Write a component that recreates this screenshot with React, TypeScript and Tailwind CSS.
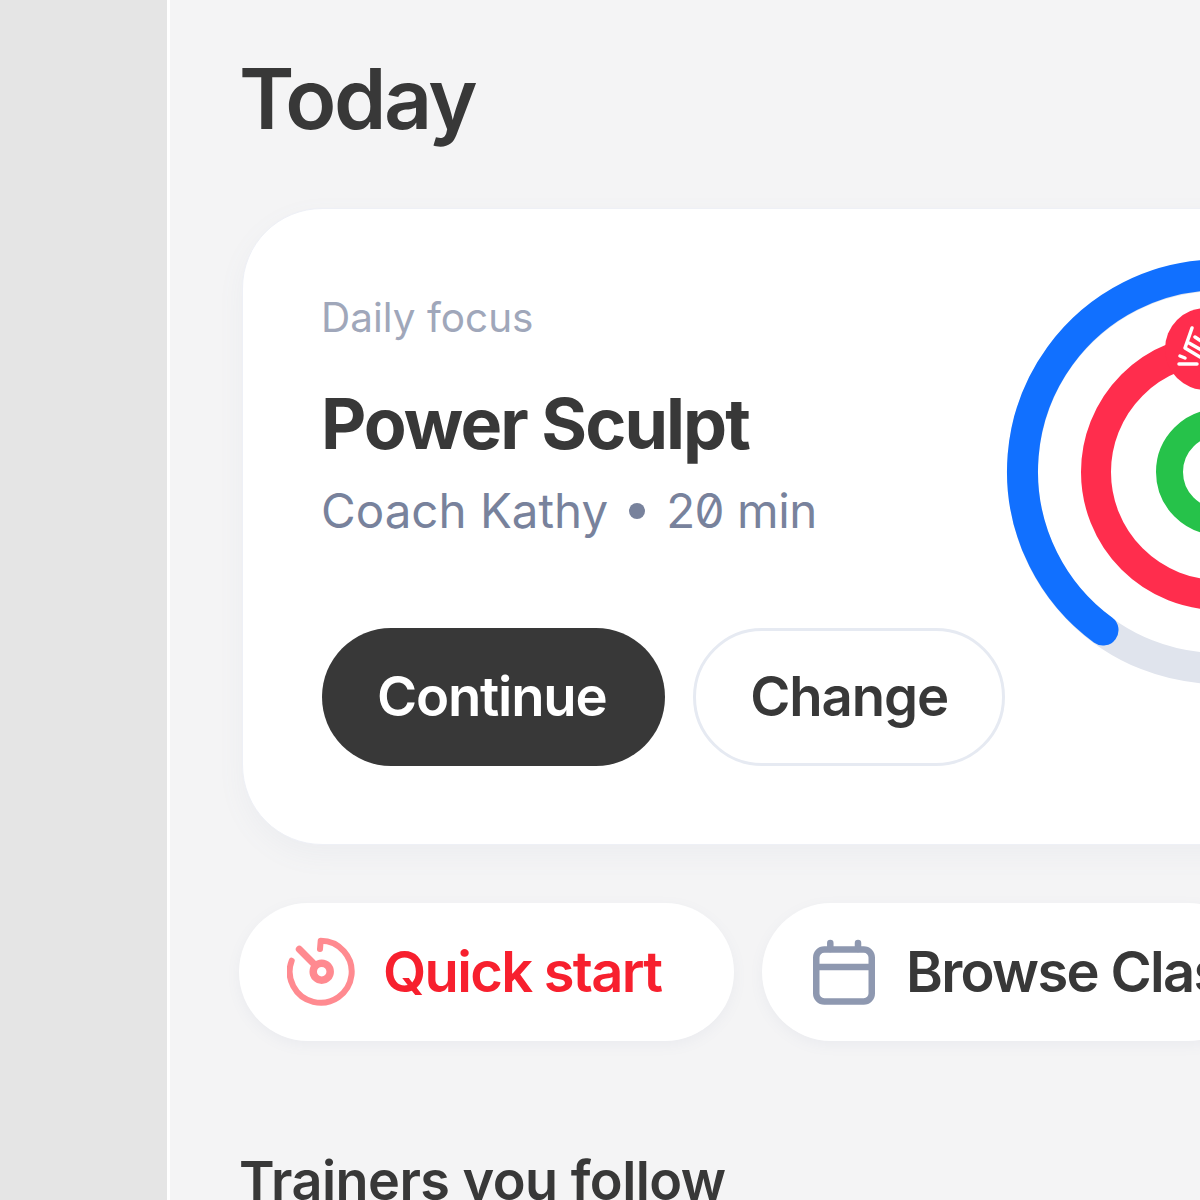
import React from 'react';

const inter = "font-['Inter',sans-serif]";

const Rings = () => (
  <svg className="shrink-0 mt-[-34px]" width="440" height="440" viewBox="0 0 440 440" fill="none">
    {/* centre sits at 214,212 so the rings run off the right edge like the source */}
    <circle cx="214" cy="212" r="196.5" stroke="#e0e4ed" strokeWidth="31" />
    <path d="M 98 370 A 196.5 196.5 0 1 1 410.5 212" stroke="#1170ff" strokeWidth="31" strokeLinecap="round" />
    <circle cx="214" cy="212" r="123" stroke="#ff2d4d" strokeWidth="30" />
    <circle cx="214" cy="212" r="49.5" stroke="#26c24a" strokeWidth="27" />
    <circle cx="201" cy="89" r="41" fill="#ff2d4d" />
    <path d="M174 104h18M175 96l5 2" stroke="#fff" strokeWidth="3.5" strokeLinecap="round" />
    <path d="M187 68l-7 20 15 9M190 77l12 8M184 83l14 8" stroke="#fff" strokeWidth="3.5" strokeLinecap="round" strokeLinejoin="round" />
  </svg>
);

const QuickIcon = () => (
  <svg className="shrink-0" width="70" height="70" viewBox="0 0 70 70" fill="none" stroke="#ff8a90" strokeLinecap="round">
    <path d="M4.7 23.7A31 31 0 1 0 33.7 3.7L33 12" strokeWidth="6" strokeLinejoin="round" />
    <circle cx="34.7" cy="34.7" r="8.5" strokeWidth="7.5" />
    <path d="M12.3 12.3L26 26" strokeWidth="7" />
  </svg>
);

const CalendarIcon = () => (
  <svg className="shrink-0" width="62" height="66" viewBox="0 0 62 66" fill="none" stroke="#8e98b0">
    <rect x="3.25" y="10.5" width="55.5" height="52" rx="8" strokeWidth="6.5" />
    <path d="M3 28h56" strokeWidth="6.5" />
    <path d="M17.3 4v6M45 4v6" strokeWidth="6.5" strokeLinecap="round" />
  </svg>
);

export default function App() {
  return (
    <div className={`${inter} w-[1200px] h-[1200px] overflow-hidden flex bg-[#f4f4f5] text-[#383838]`}>
      <div className="w-[167px] shrink-0 bg-[#e5e5e5]" />
      <div className="w-[3px] shrink-0 bg-white" />

      <main className="flex-1 min-w-0 pl-[72px]">
        <h1 className="pt-[53px] -ml-[3px] text-[84px] leading-[92px] font-semibold tracking-[-0.03em]">Today</h1>

        <section className="mt-[63px] w-[1300px] h-[637px] rounded-[80px] bg-white border border-[#eef0f6] shadow-[0_10px_28px_rgba(120,130,170,0.06)] pl-[79px] pt-[85px] flex">
          <div className="w-[683px] shrink-0">
            <p className="text-[40.5px] leading-[48px] text-[#a0a7ba] -ml-px">Daily focus</p>
            <h2 className="mt-[44px] -ml-px text-[70px] leading-[76px] font-bold tracking-[-0.028em]">Power Sculpt</h2>
            <p className="mt-[21px] -ml-px text-[47.5px] leading-[56px] text-[#78829c] flex items-center [font-feature-settings:'zero']">
              Coach Kathy
              <span className="mx-[21px] w-[16px] h-[16px] rounded-full bg-[#78829c]" />
              <span className="tracking-[-0.01em]">20 min</span>
            </p>
            <div className="mt-[89px] flex gap-[28px]">
              <button className="w-[344px] h-[138px] pr-[4px] rounded-full bg-[#383838] text-white text-[54.5px] font-semibold tracking-[-0.022em]">Continue</button>
              <button className="w-[312px] h-[138px] rounded-full bg-white border-[3px] border-[#e6eaf2] text-[54.5px] font-semibold tracking-[-0.02em]">Change</button>
            </div>
          </div>
          <Rings />
        </section>

        <div className="mt-[58px] -ml-[3px] flex gap-[28px]">
          <div className="w-[495px] h-[138px] shrink-0 rounded-full bg-white shadow-[0_4px_14px_rgba(120,130,170,0.07)] pl-[48px] flex items-center gap-[26px]">
            <QuickIcon />
            <span className="text-[56px] font-semibold text-[#f7202e] tracking-[-0.03em]">Quick start</span>
          </div>
          <div className="w-[495px] h-[138px] shrink-0 rounded-full bg-white shadow-[0_4px_14px_rgba(120,130,170,0.07)] pl-[51px] flex items-center gap-[31px]">
            <CalendarIcon />
            <span className="text-[56px] font-semibold whitespace-nowrap tracking-[-0.03em]">Browse Classes</span>
          </div>
        </div>

        <h3 className="mt-[108px] -ml-[3px] text-[54px] leading-[64px] font-semibold whitespace-nowrap tracking-[-0.01em]">Trainers you follow</h3>
      </main>
    </div>
  );
}
